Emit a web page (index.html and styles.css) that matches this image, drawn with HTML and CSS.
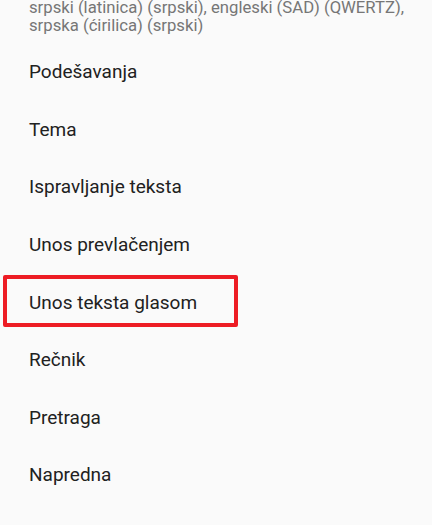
FILE: index.html
```html
<!DOCTYPE html>
<html>
<head>
        <title>Jezici i unos</title>
        <link rel="stylesheet" href="styles.css">
</head>
<body>
        <!--Summary of enabled languages-->
        <div class="summary">
                srpski (latinica) (srpski), engleski (SAD) (QWERTZ),<br>
                srpska (ćirilica) (srpski)
        </div>

        <!--Settings list-->
        <ul class="menu">
                <li class="menu-item">Podešavanja</li>
                <li class="menu-item">Tema</li>
                <li class="menu-item">Ispravljanje teksta</li>
                <li class="menu-item">Unos prevlačenjem</li>
                <li class="menu-item marked">Unos teksta glasom</li>
                <li class="menu-item">Rečnik</li>
                <li class="menu-item">Pretraga</li>
                <li class="menu-item">Napredna</li>
        </ul>
</body>
</html>
```

FILE: styles.css
```css
body {
    margin: 0;
    background-color: #fafafa;
    font-family: Roboto, "Noto Sans", sans-serif;
    overflow: hidden;
}

/* grey text under the languages heading */
.summary {
    margin-top: -1px;
    padding-left: 29px;
    font-size: 16.7px;
    line-height: 18px;
    color: #767676;
}

/* list of settings */
.menu {
    list-style: none;
    margin: 0;
    padding: 8px 0 0 0;
}
.menu-item {
    position: relative;
    height: 57.6px;
    display: flex;
    align-items: center;
    padding-left: 29px;
    font-size: 19px;
    color: #212121;
}

/* red annotation box */
.marked::after {
    content: "";
    position: absolute;
    left: 3px;
    top: 2px;
    width: 227px;
    height: 44px;
    border: 4px solid #ed1c24;
    border-radius: 2px;
}
```
